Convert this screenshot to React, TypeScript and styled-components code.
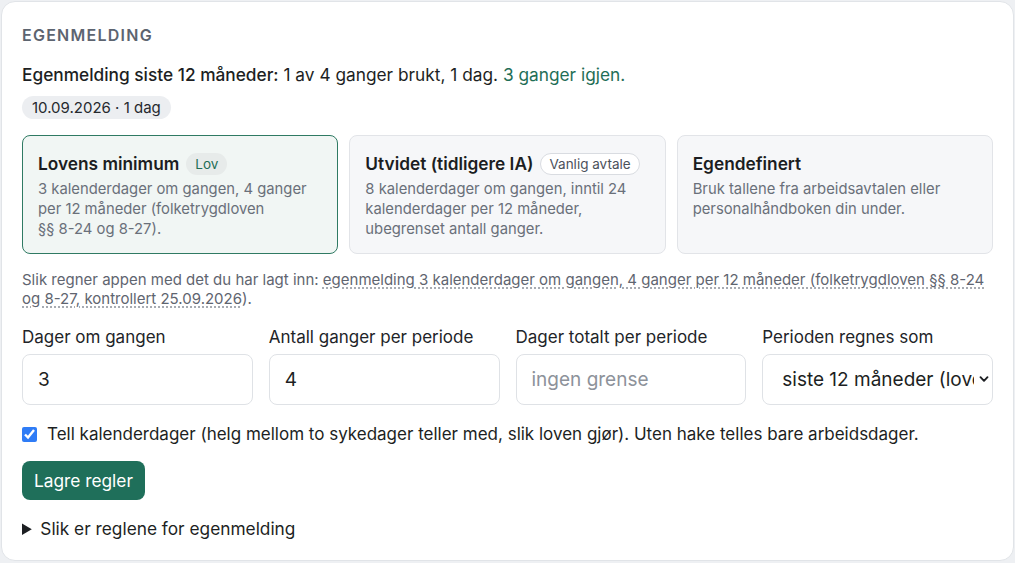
import * as React from 'react'
import styled, { createGlobalStyle } from 'styled-components'

const GlobalStyle = createGlobalStyle`
    html, body {
        margin: 0;
        padding: 0;
        background: #eef0f3;
    }
    body {
        font-family: Inter, "Noto Sans", "Liberation Sans", sans-serif;
        color: #1d1f23;
        -webkit-font-smoothing: antialiased;
    }
`

const Panel = styled.section`
    box-sizing: border-box;
    margin: 1px;
    width: 1013px;
    height: 560px;
    background: #ffffff;
    border: 1px solid #e1e4e8;
    border-radius: 14px;
    padding: 20px 20px 0 20px;
`

const Heading = styled.h2`
    margin: 0;
    font-size: 16px;
    font-weight: 600;
    letter-spacing: 1.25px;
    text-transform: uppercase;
    color: #5d6470;
    line-height: 26px;
`

const Summary = styled.p`
    margin: 14px 0 0 0;
    font-size: 17.3px;
    line-height: 26px;
    color: #1d1f23;

    strong {
        font-weight: 500;
    }
`

const Remaining = styled.span`
    color: #1f6e56;
`

const PillRow = styled.div`
    display: flex;
    margin-top: 8px;
`

const Pill = styled.span`
    padding: 0 10px;
    height: 23px;
    line-height: 23px;
    border-radius: 12px;
    background: #eceef1;
    font-size: 15px;
    color: #26292e;
`

const Options = styled.div`
    display: grid;
    grid-template-columns: repeat(3, 1fr);
    gap: 11px;
    margin-top: 16px;
`

const Option = styled.div<{ active?: boolean }>`
    box-sizing: border-box;
    height: 119px;
    border-radius: 8px;
    border: 1px solid ${({ active }) => (active ? '#2f7a63' : '#e2e4e8')};
    background: ${({ active }) => (active ? '#f1f6f4' : '#f6f7f9')};
    padding: 15px 15px 0 15px;
`

const OptionTitle = styled.div`
    display: flex;
    align-items: center;
    gap: 7px;
    font-size: 17.3px;
    font-weight: 600;
    line-height: 26px;
    color: #1b1d21;
`

const Badge = styled.span<{ outline?: boolean }>`
    box-sizing: border-box;
    font-size: 13.5px;
    font-weight: 400;
    height: 22px;
    line-height: 20px;
    padding: 0 8px;
    border-radius: 11px;
    color: ${({ outline }) => (outline ? '#4b515b' : '#1f6e56')};
    background: ${({ outline }) => (outline ? '#ffffff' : '#e7ebea')};
    border: 1px solid ${({ outline }) => (outline ? '#d9dce1' : 'transparent')};
`

const OptionText = styled.p`
    margin: 2px 0 0 0;
    font-size: 14.8px;
    line-height: 20px;
    color: #6a707a;
`

const NoWrap = styled.span`
    white-space: nowrap;
`

const Explain = styled.p`
    margin: 16px 0 0 0;
    font-size: 15px;
    line-height: 19px;
    color: #5f6570;
`

const Dotted = styled.span`
    text-decoration: underline dotted #8a9099;
    text-underline-offset: 3px;
`

const Fields = styled.div`
    display: grid;
    grid-template-columns: repeat(4, 1fr);
    gap: 16px;
    margin-top: 18px;
`

const Field = styled.label`
    display: flex;
    flex-direction: column;
    gap: 6px;
    font-size: 17px;
    line-height: 22px;
    color: #222428;
`

const Input = styled.input`
    box-sizing: border-box;
    height: 51px;
    width: 100%;
    border: 1px solid #dfe2e6;
    border-radius: 8px;
    background: #ffffff;
    padding: 0 15px;
    font-family: inherit;
    font-size: 19px;
    color: #1d1f23;
    outline: none;

    &::placeholder {
        color: #8d929a;
    }
`

const SelectWrap = styled.div`
    position: relative;
`

const Select = styled.select`
    box-sizing: border-box;
    appearance: none;
    height: 51px;
    width: 100%;
    border: 1px solid #dfe2e6;
    border-radius: 8px;
    background: #ffffff;
    padding: 0 18px 0 19px;
    font-family: inherit;
    font-size: 19px;
    color: #1d1f23;
    outline: none;
`

const Chevron = styled.svg`
    position: absolute;
    right: 4px;
    top: 20px;
    width: 10px;
    height: 10px;
    padding-left: 1px;
    background: #ffffff;
    pointer-events: none;
`

const CheckRow = styled.label`
    display: flex;
    align-items: center;
    gap: 10px;
    margin-top: 18px;
    font-size: 17px;
    line-height: 22px;
    color: #1d1f23;

    input {
        margin: 0;
        width: 15px;
        height: 15px;
        accent-color: #2f7cf6;
    }
`

const SaveButton = styled.button`
    display: block;
    margin-top: 16px;
    height: 39px;
    padding: 0 12px;
    border: none;
    border-radius: 8px;
    background: #1f6f5a;
    color: #ffffff;
    font-family: inherit;
    font-size: 17.3px;
`

const Details = styled.details`
    margin-top: 18px;
    font-size: 17.3px;
    line-height: 22px;
    color: #1d1f23;

    summary {
        cursor: pointer;
    }
`

const App: React.FC = () => {
    return (
        <>
            <GlobalStyle />
            <Panel>
                <Heading>Egenmelding</Heading>
                <Summary>
                    <strong>Egenmelding siste 12 måneder:</strong> 1 av 4 ganger brukt, 1 dag.{' '}
                    <Remaining>3 ganger igjen.</Remaining>
                </Summary>
                <PillRow>
                    <Pill>10.09.2026 · 1 dag</Pill>
                </PillRow>

                <Options>
                    <Option active>
                        <OptionTitle>
                            Lovens minimum <Badge>Lov</Badge>
                        </OptionTitle>
                        <OptionText>
                            3 kalenderdager om gangen, 4 ganger per 12 måneder (folketrygdloven{' '}
                            <NoWrap>§§ 8-24</NoWrap> og 8-27).
                        </OptionText>
                    </Option>
                    <Option>
                        <OptionTitle>
                            Utvidet (tidligere IA) <Badge outline>Vanlig avtale</Badge>
                        </OptionTitle>
                        <OptionText>
                            8 kalenderdager om gangen, inntil 24 kalenderdager per 12 måneder, ubegrenset
                            antall ganger.
                        </OptionText>
                    </Option>
                    <Option>
                        <OptionTitle>Egendefinert</OptionTitle>
                        <OptionText>
                            Bruk tallene fra arbeidsavtalen eller personalhåndboken din under.
                        </OptionText>
                    </Option>
                </Options>

                <Explain>
                    Slik regner appen med det du har lagt inn:{' '}
                    <Dotted>
                        egenmelding 3 kalenderdager om gangen, 4 ganger per 12 måneder (folketrygdloven §§
                        8-24 og 8-27, kontrollert 25.09.2026
                    </Dotted>
                    ).
                </Explain>

                <Fields>
                    <Field>
                        Dager om gangen
                        <Input defaultValue="3" />
                    </Field>
                    <Field>
                        Antall ganger per periode
                        <Input defaultValue="4" />
                    </Field>
                    <Field>
                        Dager totalt per periode
                        <Input placeholder="ingen grense" />
                    </Field>
                    <Field>
                        Perioden regnes som
                        <SelectWrap>
                            <Select defaultValue="rolling">
                                <option value="rolling">siste 12 måneder (lovens regel)</option>
                                <option value="calendar">kalenderår</option>
                            </Select>
                            <Chevron viewBox="0 0 10 10">
                                <path
                                    d="M1.5 3.2 L5 6.8 L8.5 3.2"
                                    fill="none"
                                    stroke="#1d1f23"
                                    strokeWidth="1.9"
                                    strokeLinecap="round"
                                    strokeLinejoin="round"
                                />
                            </Chevron>
                        </SelectWrap>
                    </Field>
                </Fields>

                <CheckRow>
                    <input type="checkbox" defaultChecked />
                    Tell kalenderdager (helg mellom to sykedager teller med, slik loven gjør). Uten hake telles
                    bare arbeidsdager.
                </CheckRow>

                <SaveButton>Lagre regler</SaveButton>

                <Details>
                    <summary>Slik er reglene for egenmelding</summary>
                </Details>
            </Panel>
        </>
    )
}

export default App
